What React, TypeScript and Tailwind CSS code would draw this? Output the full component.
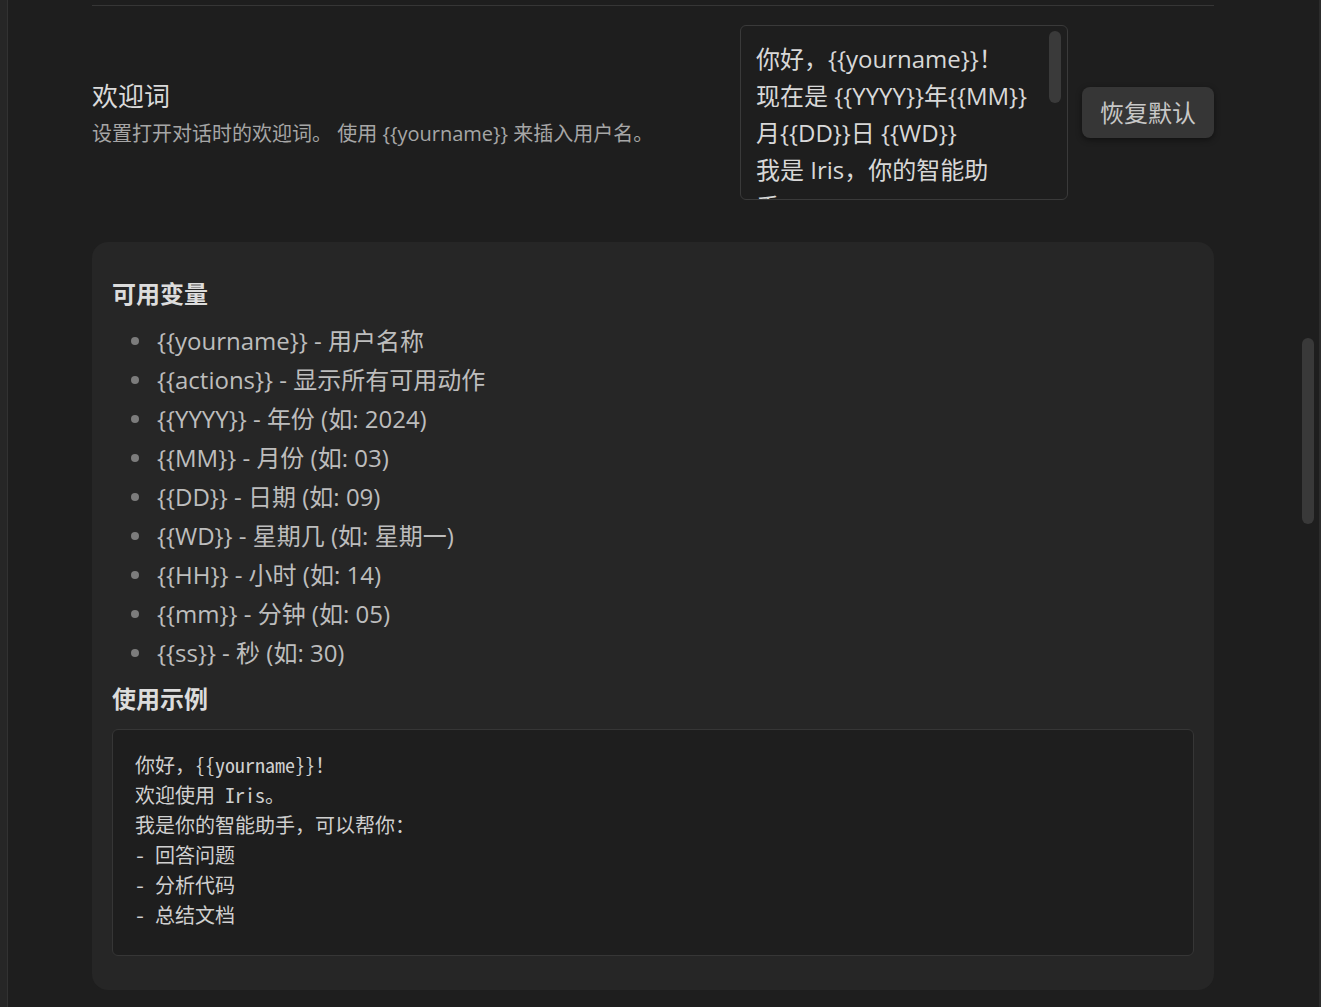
import React from "react"

const variables: [string, string][] = [
    ["{{yourname}}", "用户名称"],
    ["{{actions}}", "显示所有可用动作"],
    ["{{YYYY}}", "年份 (如: 2024)"],
    ["{{MM}}", "月份 (如: 03)"],
    ["{{DD}}", "日期 (如: 09)"],
    ["{{WD}}", "星期几 (如: 星期一)"],
    ["{{HH}}", "小时 (如: 14)"],
    ["{{mm}}", "分钟 (如: 05)"],
    ["{{ss}}", "秒 (如: 30)"],
]

const greetingLines = [
    "你好，{{yourname}}！",
    "现在是 {{YYYY}}年{{MM}}",
    "月{{DD}}日 {{WD}}",
    "我是 Iris，你的智能助",
    "手",
]

const exampleLines = [
    "你好，{{yourname}}！",
    "欢迎使用 Iris。",
    "我是你的智能助手，可以帮你：",
    "- 回答问题",
    "- 分析代码",
    "- 总结文档",
]

const sans = "font-['Open_Sans','Noto_Sans_CJK_SC',sans-serif]"

export default function App() {
    return (
        <div className={`relative flex h-[1007px] w-full overflow-hidden bg-[#1e1e1e] ${sans}`}>
            {/* left sidebar edge */}
            <div className="w-[8px] shrink-0 border-r border-[#323232] bg-[#262626]" />

            <div className="flex-1 border-r-2 border-[#2c2c2c] pl-[84px] pr-[105px]">
                <div className="h-[5px]" />
                <div className="border-t border-[#363636]" />

                {/* Setting row */}
                <div className="mt-[19px] flex items-center">
                    <div className="flex-1 pt-[5px]">
                        <div className="text-[26px] leading-[36px] text-[#dadada]">欢迎词</div>
                        <div className="mt-[2px] text-[20px] leading-[36px] text-[#a6a6a6]">
                            设置打开对话时的欢迎词。 使用 {"{{yourname}}"} 来插入用户名。
                        </div>
                    </div>
                    <div className="relative h-[175px] w-[328px] shrink-0 overflow-hidden rounded-[6px] border border-[#3a3a3a] bg-[#1e1e1e] pl-[15px] pt-[14px]">
                        {greetingLines.map((line, i) => (
                            <div key={i} className="whitespace-nowrap text-[24px] leading-[37px] text-[#d8d8d8]">
                                {line}
                            </div>
                        ))}
                        <div className="absolute right-[6px] top-[5px] h-[72px] w-[12px] rounded-full bg-[#3a3a3a]" />
                    </div>
                    <button className="ml-[14px] h-[51px] w-[132px] shrink-0 rounded-[8px] bg-[#363636] text-[24px] text-[#c8c8c8] shadow-[0_2px_6px_rgba(0,0,0,0.45)]">
                        恢复默认
                    </button>
                </div>

                {/* Info card */}
                <div className="mt-[42px] rounded-[16px] bg-[#262626] px-[20px] pb-[34px] pt-[34px]">
                    <h3 className="text-[24px] font-bold leading-[36px] text-[#dcdcdc]">可用变量</h3>
                    <ul className="mt-[9px]">
                        {variables.map(([key, desc]) => (
                            <li key={key} className="flex h-[39px] items-center text-[24px] text-[#bdbdbd]">
                                <span className="ml-[19px] mr-[18px] h-[8px] w-[8px] rounded-full bg-[#7c7c7c]" />
                                <span>
                                    {key} - {desc}
                                </span>
                            </li>
                        ))}
                    </ul>
                    <h3 className="mt-[9px] text-[24px] font-bold leading-[36px] text-[#dcdcdc]">使用示例</h3>
                    <div className="mt-[12px] rounded-[6px] border border-[#363636] bg-[#1e1e1e] px-[22px] pb-[25px] pt-[20px]">
                        {exampleLines.map((line, i) => (
                            <div
                                key={i}
                                className="whitespace-pre font-['Noto_Sans_Mono_CJK_SC','Liberation_Mono','Noto_Sans_CJK_SC',monospace] text-[20px] leading-[30px] text-[#d0d0d0]"
                            >
                                {line}
                            </div>
                        ))}
                    </div>
                </div>
            </div>

            {/* page scrollbar */}
            <div className="absolute left-[1302px] top-[338px] h-[186px] w-[12px] rounded-full bg-[#393939]" />
        </div>
    )
}
